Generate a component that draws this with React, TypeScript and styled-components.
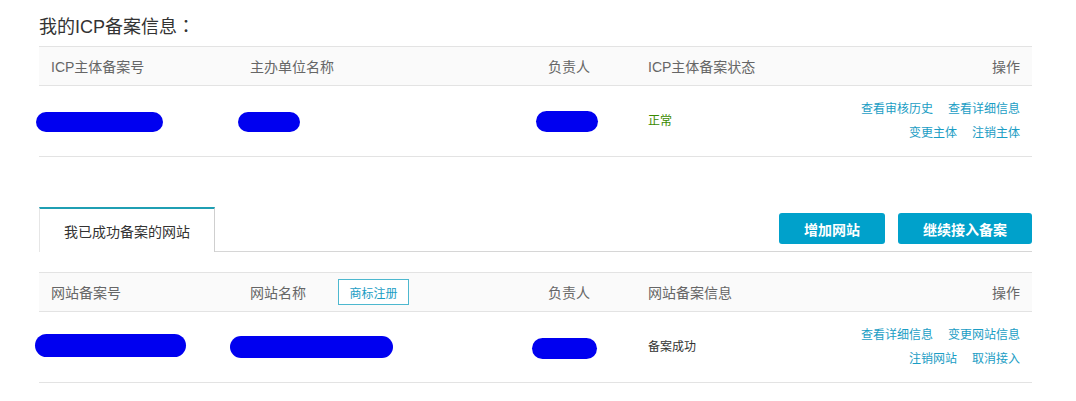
import React from "react";
import styled, { createGlobalStyle } from "styled-components";

const Global = createGlobalStyle`
  html, body { margin: 0; padding: 0; background: #fff; }
  body { font-family: "Liberation Sans", "Noto Sans CJK SC", sans-serif; color: #333; }
  * { box-sizing: border-box; }
`;

const Page = styled.div`
  width: 1076px;
  padding: 13px 44px 0 39px;
`;

const Title = styled.h2`
  margin: 0;
  height: 33px;
  font-size: 18px;
  font-weight: normal;
  line-height: 24px;
  color: #333;
`;

const Colon = styled.span`
  font-family: "Noto Sans CJK TC", sans-serif;
`;

const Table = styled.div`
  width: 993px;
`;

const cols = "199px 298px 100px 200px 196px";

const HeadRow = styled.div`
  display: grid;
  grid-template-columns: ${cols};
  height: 40px;
  background: #fafafa;
  border-top: 1px solid #e3e3e3;
  border-bottom: 1px solid #e3e3e3;
  align-items: center;
  font-size: 14px;
  color: #666;
`;

const BodyRow = styled.div`
  display: grid;
  grid-template-columns: ${cols};
  height: 71px;
  border-bottom: 1px solid #e3e3e3;
  align-items: center;
  font-size: 12px;
`;

const Cell = styled.div<{ $right?: boolean }>`
  padding: 0 12px;
  display: flex;
  align-items: center;
  justify-content: ${(p) => (p.$right ? "flex-end" : "flex-start")};
  text-align: ${(p) => (p.$right ? "right" : "left")};
`;

const Blob = styled.span<{ $w: number; $h: number; $dx: number; $dy: number }>`
  display: inline-block;
  width: ${(p) => p.$w}px;
  height: ${(p) => p.$h}px;
  margin-left: ${(p) => p.$dx}px;
  margin-top: ${(p) => p.$dy}px;
  background: #0000f0;
  border-radius: ${(p) => p.$h / 2}px;
`;

const Status = styled.span<{ $tone: "ok" | "plain" }>`
  font-size: 12px;
  margin-top: -3px;
  color: ${(p) => (p.$tone === "ok" ? "#3a8a00" : "#333")};
`;

const Links = styled.div`
  display: flex;
  flex-direction: column;
  align-items: flex-end;
  gap: 6px;
  line-height: 18px;
`;

const LinkLine = styled.div`
  display: flex;
  gap: 15px;
`;

const Link = styled.a`
  color: #1a9dc4;
  font-size: 12px;
  text-decoration: none;
  cursor: pointer;
`;

const TabBar = styled.div`
  margin-top: 50px;
  width: 993px;
  height: 45px;
  display: flex;
  align-items: flex-start;
  border-bottom: 1px solid #d6d6d6;
`;

const Tab = styled.div`
  width: 176px;
  height: 45px;
  border-top: 2px solid #1f9fb3;
  border-left: 1px solid #e6e6e6;
  border-right: 1px solid #cfcfcf;
  background: #fff;
  margin-bottom: -1px;
  display: flex;
  align-items: center;
  justify-content: center;
  font-size: 14px;
  color: #333;
`;

const Actions = styled.div`
  margin-left: auto;
  margin-top: 6px;
  display: flex;
  gap: 13px;
`;

const PrimaryButton = styled.button<{ $w: number }>`
  width: ${(p) => p.$w}px;
  height: 31px;
  border: none;
  border-radius: 3px;
  background: #00a1cb;
  color: #fff;
  font-family: inherit;
  font-size: 14px;
  font-weight: bold;
  cursor: pointer;
`;

const Gap = styled.div`
  height: 20px;
`;

const OutlineButton = styled.button`
  margin-left: 32px;
  width: 71px;
  height: 26px;
  border: 1px solid #4db8cf;
  background: #fff;
  color: #1a9dc4;
  font-family: inherit;
  font-size: 12px;
  padding: 0;
  cursor: pointer;
`;

export default function App() {
  return (
    <Page>
      <Global />
      <Title>
        我的ICP备案信息<Colon>：</Colon>
      </Title>
      <Table>
        <HeadRow>
          <Cell>ICP主体备案号</Cell>
          <Cell>主办单位名称</Cell>
          <Cell>负责人</Cell>
          <Cell>ICP主体备案状态</Cell>
          <Cell $right>操作</Cell>
        </HeadRow>
        <BodyRow>
          <Cell>
            <Blob $w={127} $h={20} $dx={-15} $dy={2} />
          </Cell>
          <Cell>
            <Blob $w={62} $h={20} $dx={-12} $dy={2} />
          </Cell>
          <Cell>
            <Blob $w={62} $h={21} $dx={-12} $dy={0} />
          </Cell>
          <Cell>
            <Status $tone="ok">正常</Status>
          </Cell>
          <Cell $right>
            <Links>
              <LinkLine>
                <Link>查看审核历史</Link>
                <Link>查看详细信息</Link>
              </LinkLine>
              <LinkLine>
                <Link>变更主体</Link>
                <Link>注销主体</Link>
              </LinkLine>
            </Links>
          </Cell>
        </BodyRow>
      </Table>

      <TabBar>
        <Tab>我已成功备案的网站</Tab>
        <Actions>
          <PrimaryButton $w={106}>增加网站</PrimaryButton>
          <PrimaryButton $w={134}>继续接入备案</PrimaryButton>
        </Actions>
      </TabBar>
      <Gap />

      <Table>
        <HeadRow>
          <Cell>网站备案号</Cell>
          <Cell>
            网站名称
            <OutlineButton>商标注册</OutlineButton>
          </Cell>
          <Cell>负责人</Cell>
          <Cell>网站备案信息</Cell>
          <Cell $right>操作</Cell>
        </HeadRow>
        <BodyRow>
          <Cell>
            <Blob $w={151} $h={23} $dx={-16} $dy={-4} />
          </Cell>
          <Cell>
            <Blob $w={163} $h={22} $dx={-20} $dy={0} />
          </Cell>
          <Cell>
            <Blob $w={65} $h={21} $dx={-16} $dy={2} />
          </Cell>
          <Cell>
            <Status $tone="plain">备案成功</Status>
          </Cell>
          <Cell $right>
            <Links>
              <LinkLine>
                <Link>查看详细信息</Link>
                <Link>变更网站信息</Link>
              </LinkLine>
              <LinkLine>
                <Link>注销网站</Link>
                <Link>取消接入</Link>
              </LinkLine>
            </Links>
          </Cell>
        </BodyRow>
      </Table>
    </Page>
  );
}
